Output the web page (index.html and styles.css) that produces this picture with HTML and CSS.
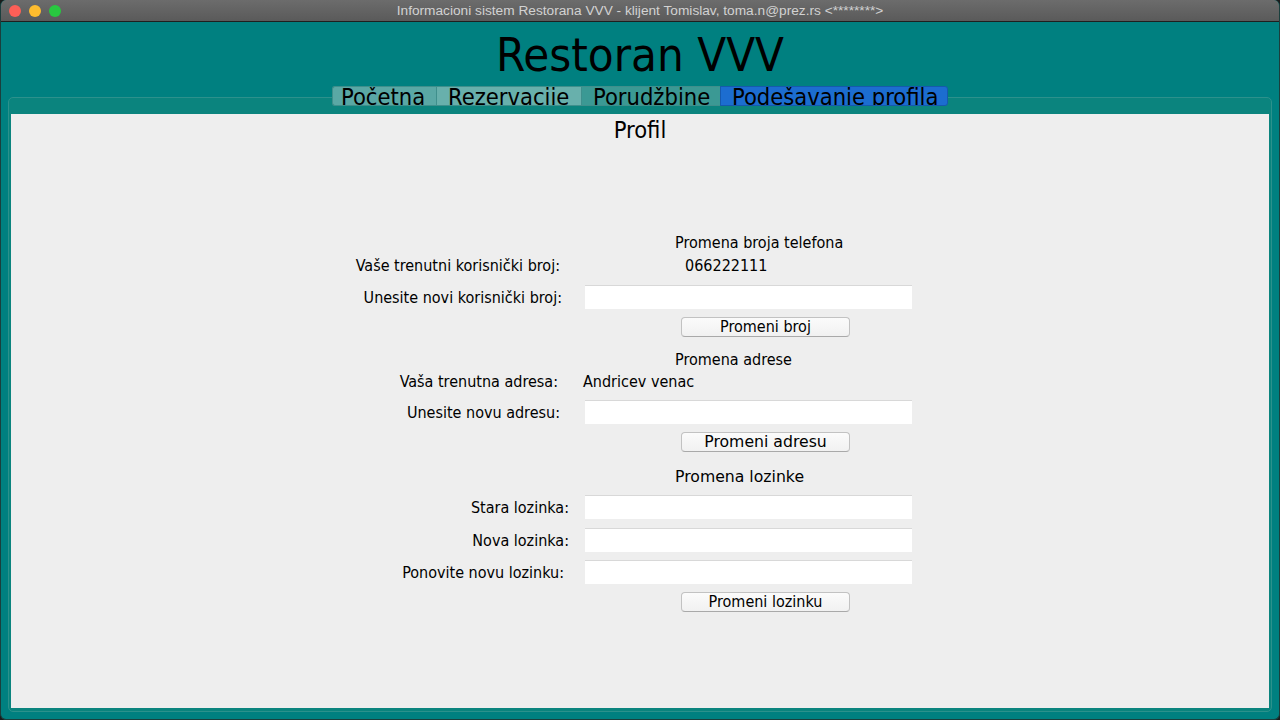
FILE: index.html
```html
<!DOCTYPE html>
<html lang="sr">
<head>
<meta charset="utf-8">
<title>Restoran VVV</title>
<link rel="stylesheet" href="styles.css">
</head>
<body>
<div class="window">
  <div class="titlebar">
    <div class="lights">
      <span class="light red"></span>
      <span class="light yellow"></span>
      <span class="light green"></span>
    </div>
    <div class="wintitle">Informacioni sistem Restorana VVV - klijent Tomislav, toma.n@prez.rs &lt;********&gt;</div>
  </div>
  <div class="main">
    <h1 class="app-title">Restoran VVV</h1>
    <div class="tabs">
      <div class="tab t1">Početna</div>
      <div class="tab t2">Rezervacije</div>
      <div class="tab t3">Porudžbine</div>
      <div class="tab active">Podešavanje profila</div>
    </div>
    <div class="panel">
      <div class="content">
        <div class="page-title">Profil</div>
        <div class="form">
          <div class="row r-h1">
            <div class="lbl"></div>
            <div class="fld"><span class="sec sec-1">Promena broja telefona</span></div>
          </div>
          <div class="row r-cur1">
            <div class="lbl pr10">Vaše trenutni korisnički broj:</div>
            <div class="fld"><span class="val val-num">066222111</span></div>
          </div>
          <div class="row r-in1">
            <div class="lbl pr8">Unesite novi korisnički broj:</div>
            <div class="fld"><input class="inp" type="text"></div>
          </div>
          <div class="row r-btn">
            <div class="lbl"></div>
            <div class="fld"><button class="btn">Promeni broj</button></div>
          </div>
          <div class="row r-h2">
            <div class="lbl"></div>
            <div class="fld"><span class="sec">Promena adrese</span></div>
          </div>
          <div class="row r-cur2">
            <div class="lbl pr12">Vaša trenutna adresa:</div>
            <div class="fld"><span class="val val-addr">Andricev venac</span></div>
          </div>
          <div class="row r-in2">
            <div class="lbl pr10">Unesite novu adresu:</div>
            <div class="fld"><input class="inp" type="text"></div>
          </div>
          <div class="row r-btn">
            <div class="lbl"></div>
            <div class="fld"><button class="btn wide">Promeni adresu</button></div>
          </div>
          <div class="row r-h3">
            <div class="lbl"></div>
            <div class="fld"><span class="sec wide">Promena lozinke</span></div>
          </div>
          <div class="row r-in3">
            <div class="lbl pr1">Stara lozinka:</div>
            <div class="fld"><input class="inp" type="password"></div>
          </div>
          <div class="row r-in4">
            <div class="lbl pr1">Nova lozinka:</div>
            <div class="fld"><input class="inp" type="password"></div>
          </div>
          <div class="row r-in5">
            <div class="lbl pr6">Ponovite novu lozinku:</div>
            <div class="fld"><input class="inp" type="password"></div>
          </div>
          <div class="row r-btn">
            <div class="lbl"></div>
            <div class="fld"><button class="btn">Promeni lozinku</button></div>
          </div>
        </div>
      </div>
    </div>
  </div>
</div>
</body>
</html>
```
FILE: styles.css
```css
* { box-sizing: border-box; }
html, body {
  margin: 0;
  padding: 0;
  background: #1b1b1b;
}
body {
  font-family: "DejaVu Sans Condensed", "DejaVu Sans", sans-serif;
  font-stretch: condensed;
  color: #000;
}
.window {
  width: 1280px;
  height: 720px;
  display: flex;
  flex-direction: column;
  background: #008080;
  border-radius: 6px;
  overflow: hidden;
  border-left: 1px solid #1a3f3d;
  border-right: 1px solid #1a3f3d;
  border-bottom: 1px solid #1a3f3d;
}
.titlebar {
  height: 22px;
  flex: 0 0 22px;
  background: linear-gradient(#6c6c6c, #5a5a5a);
  border-bottom: 1px solid #1f1f1f;
  display: flex;
  align-items: center;
}
.lights {
  display: flex;
  gap: 8px;
  padding-left: 8px;
}
.light {
  width: 12px;
  height: 12px;
  border-radius: 50%;
  display: block;
}
.red { background: #fe5f57; }
.yellow { background: #febc2e; }
.green { background: #28c840; }
.wintitle {
  flex: 1;
  text-align: center;
  font-family: "Liberation Sans", Arial, sans-serif;
  font-stretch: normal;
  font-size: 13.7px;
  color: #d2d2d2;
  margin-right: 60px;
  white-space: nowrap;
}
.main {
  flex: 1;
  display: flex;
  flex-direction: column;
  padding: 0 7px 7px 7px;
}
.app-title {
  margin: 0;
  height: 64px;
  font-weight: normal;
  font-size: 47px;
  line-height: 64px;
  text-align: center;
  padding-top: 1px;
}
.tabs {
  display: flex;
  justify-content: center;
  height: 20px;
  position: relative;
  z-index: 1;
}
.tab {
  height: 20px;
  font-size: 23.5px;
  line-height: 20px;
  overflow: hidden;
  white-space: nowrap;
  padding-left: 11px;
  border: 1px solid #3f8f8c;
  border-right: none;
}
.t1 { width: 104px; background: #5aa8a5; border-radius: 3px 0 0 3px; padding-left: 8px; }
.t2 { width: 145px; background: #68b0ac; }
.t3 { width: 139px; background: #3b9994; }
.active {
  width: 228px;
  background: #1c6dd0;
  border-color: #1559ad;
  border-right: 1px solid #1559ad;
  border-radius: 0 3px 3px 0;
}
.panel {
  flex: 1;
  margin-top: -9px;
  background: #0b847e;
  border: 1px solid #2c918c;
  border-radius: 5px;
  padding: 16px 2px 3px 2px;
  display: flex;
}
.content {
  flex: 1;
  background: #eeeeee;
  display: flex;
  flex-direction: column;
}
.page-title {
  text-align: center;
  font-size: 23.5px;
  line-height: 30px;
  margin-top: 1px;
}
.form {
  width: 572px;
  margin-left: 329px;
  margin-top: 88px;
  display: flex;
  flex-direction: column;
  font-size: 16px;
}
.row {
  display: flex;
  align-items: center;
}
.lbl {
  width: 230px;
  flex: 0 0 230px;
  text-align: right;
  white-space: nowrap;
}
.pr1 { padding-right: 1px; }
.pr6 { padding-right: 6px; }
.pr8 { padding-right: 8px; }
.pr10 { padding-right: 10px; }
.pr12 { padding-right: 12px; }
.fld {
  margin-left: 15px;
  width: 327px;
  display: flex;
}
.sec { padding-left: 90px; white-space: nowrap; }
.wide {
  font-family: "DejaVu Sans", sans-serif;
  font-stretch: normal;
  font-size: 15.7px;
}
.val-num { padding-left: 100px; }
.val-addr { margin-left: -2px; }
.r-h1, .r-h2, .r-h3, .r-cur1, .r-cur2 { height: 18px; }
.r-h1 { margin-top: 0; }
.r-cur1 { margin-top: 5px; }
.r-in1 { margin-top: 11px; }
.r-h2 { margin-top: 13px; }
.r-cur2 { margin-top: 4px; }
.r-in2 { margin-top: 10px; }
.r-h3 { margin-top: 15px; }
.r-in3 { margin-top: 10px; }
.r-in4 { margin-top: 9px; }
.r-in5 { margin-top: 8px; }
.r-btn { margin-top: 8px; }
.inp {
  width: 327px;
  height: 24px;
  border: none;
  border-top: 1px solid #d8d8d8;
  background: #ffffff;
  padding: 0 4px;
  font: inherit;
  outline: none;
}
.btn {
  margin-left: 96px;
  width: 169px;
  height: 20px;
  padding: 0;
  border: 1px solid #c2c2c2;
  border-bottom-color: #a9a9a9;
  border-radius: 4px;
  background: linear-gradient(#fbfbfb, #f1f1f1);
  font-family: "DejaVu Sans Condensed", "DejaVu Sans", sans-serif;
  font-stretch: condensed;
  font-size: 16px;
  line-height: 18px;
  color: #000;
}
.btn.wide {
  font-family: "DejaVu Sans", sans-serif;
  font-stretch: normal;
  font-size: 15.7px;
}
```
